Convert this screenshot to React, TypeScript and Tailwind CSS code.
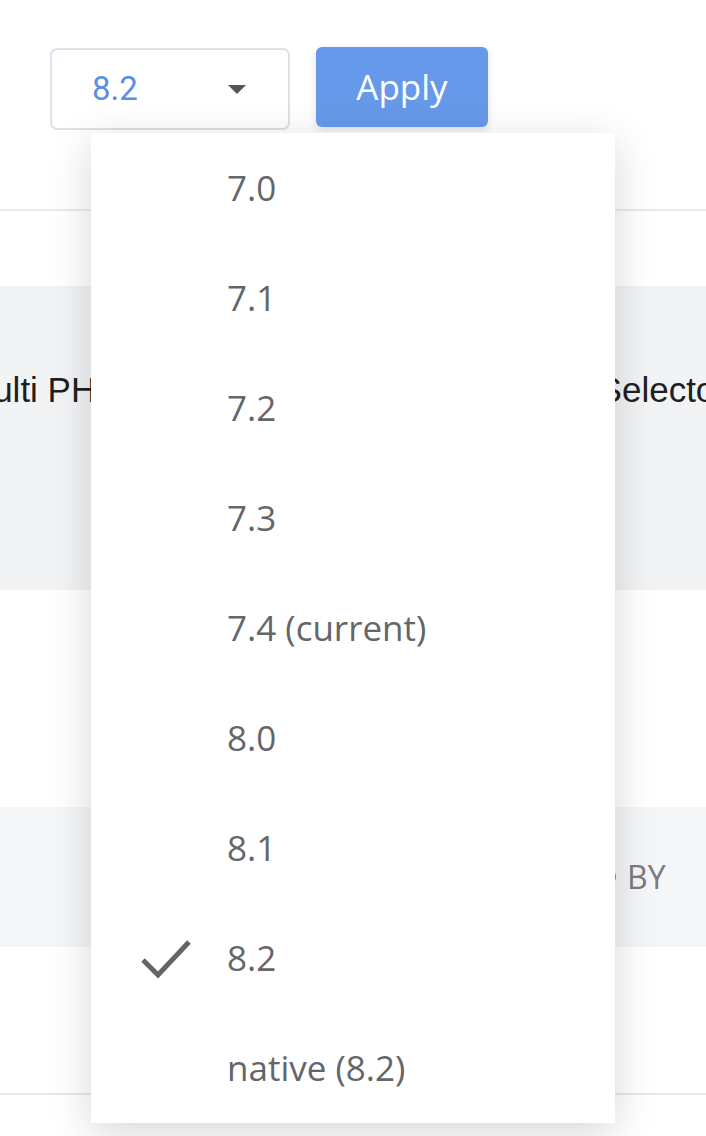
const versions = ['7.0', '7.1', '7.2', '7.3', '7.4 (current)', '8.0', '8.1', '8.2', 'native (8.2)'];
const selected = '8.2';

function CheckIcon() {
  return (
    <svg width="52" height="42" viewBox="0 0 52 42" fill="none">
      <polyline points="3,23 18,38 49,5" stroke="#636568" strokeWidth="5" />
    </svg>
  );
}

export default function App() {
  return (
    <div className="relative w-[706px] h-[1136px] overflow-hidden bg-white font-['Open_Sans',sans-serif]">
      <div className="h-[209px] flex items-start pt-[47px] pl-[50px] gap-[26px]">
        <div className="w-[240px] h-[82px] mt-[1px] rounded-[7px] border-2 border-[#dddfea] bg-white flex items-center justify-between pl-[40px] pr-[42px]">
          <span className="text-[33px] text-[#5b8ee6] font-['Roboto',sans-serif]">{selected}</span>
          <svg width="18" height="9" viewBox="0 0 18 9">
            <polygon points="0,0 18,0 9,9" fill="#555" />
          </svg>
        </div>
        <button className="w-[172px] h-[80px] rounded-[6px] bg-[#6699e9] text-white text-[35px] shadow-[0_3px_8px_rgba(0,0,0,0.12)]">
          Apply
        </button>
      </div>
      <div className="h-[2px] bg-[#ebebeb]" />
      <div className="h-[75px]" />
      <div className="h-[304px] bg-[#f2f3f5] flex items-start pt-[84px] font-['Liberation_Sans',Arial,sans-serif] text-[35px] text-[#1f1f1f] leading-[40px] whitespace-nowrap">
        <span className="-ml-[36px]">Multi PHP</span>
        <span className="ml-[479px]">Selector</span>
      </div>
      <div className="h-[217px]" />
      <div className="h-[140px] bg-[#f5f6f8] flex items-center pl-[598px] gap-[11px]">
        <span className="w-[18px] h-[18px] rounded-full bg-[#4a90e2]" />
        <span className="text-[32px] text-[#787b80]">BY</span>
      </div>
      <div className="h-[146px]" />
      <div className="h-[2px] bg-[#e8e8f0]" />

      <div className="absolute left-[91px] top-[133px] w-[524px] bg-white shadow-[0_10px_40px_rgba(0,0,0,0.16)]">
        {versions.map(v => (
          <div key={v} className="h-[110px] flex items-center">
            <div className="w-[136px] flex justify-end pr-[35px]">
              {v === selected && <CheckIcon />}
            </div>
            <span className="text-[35px] text-[#646669]">{v}</span>
          </div>
        ))}
      </div>
    </div>
  );
}
